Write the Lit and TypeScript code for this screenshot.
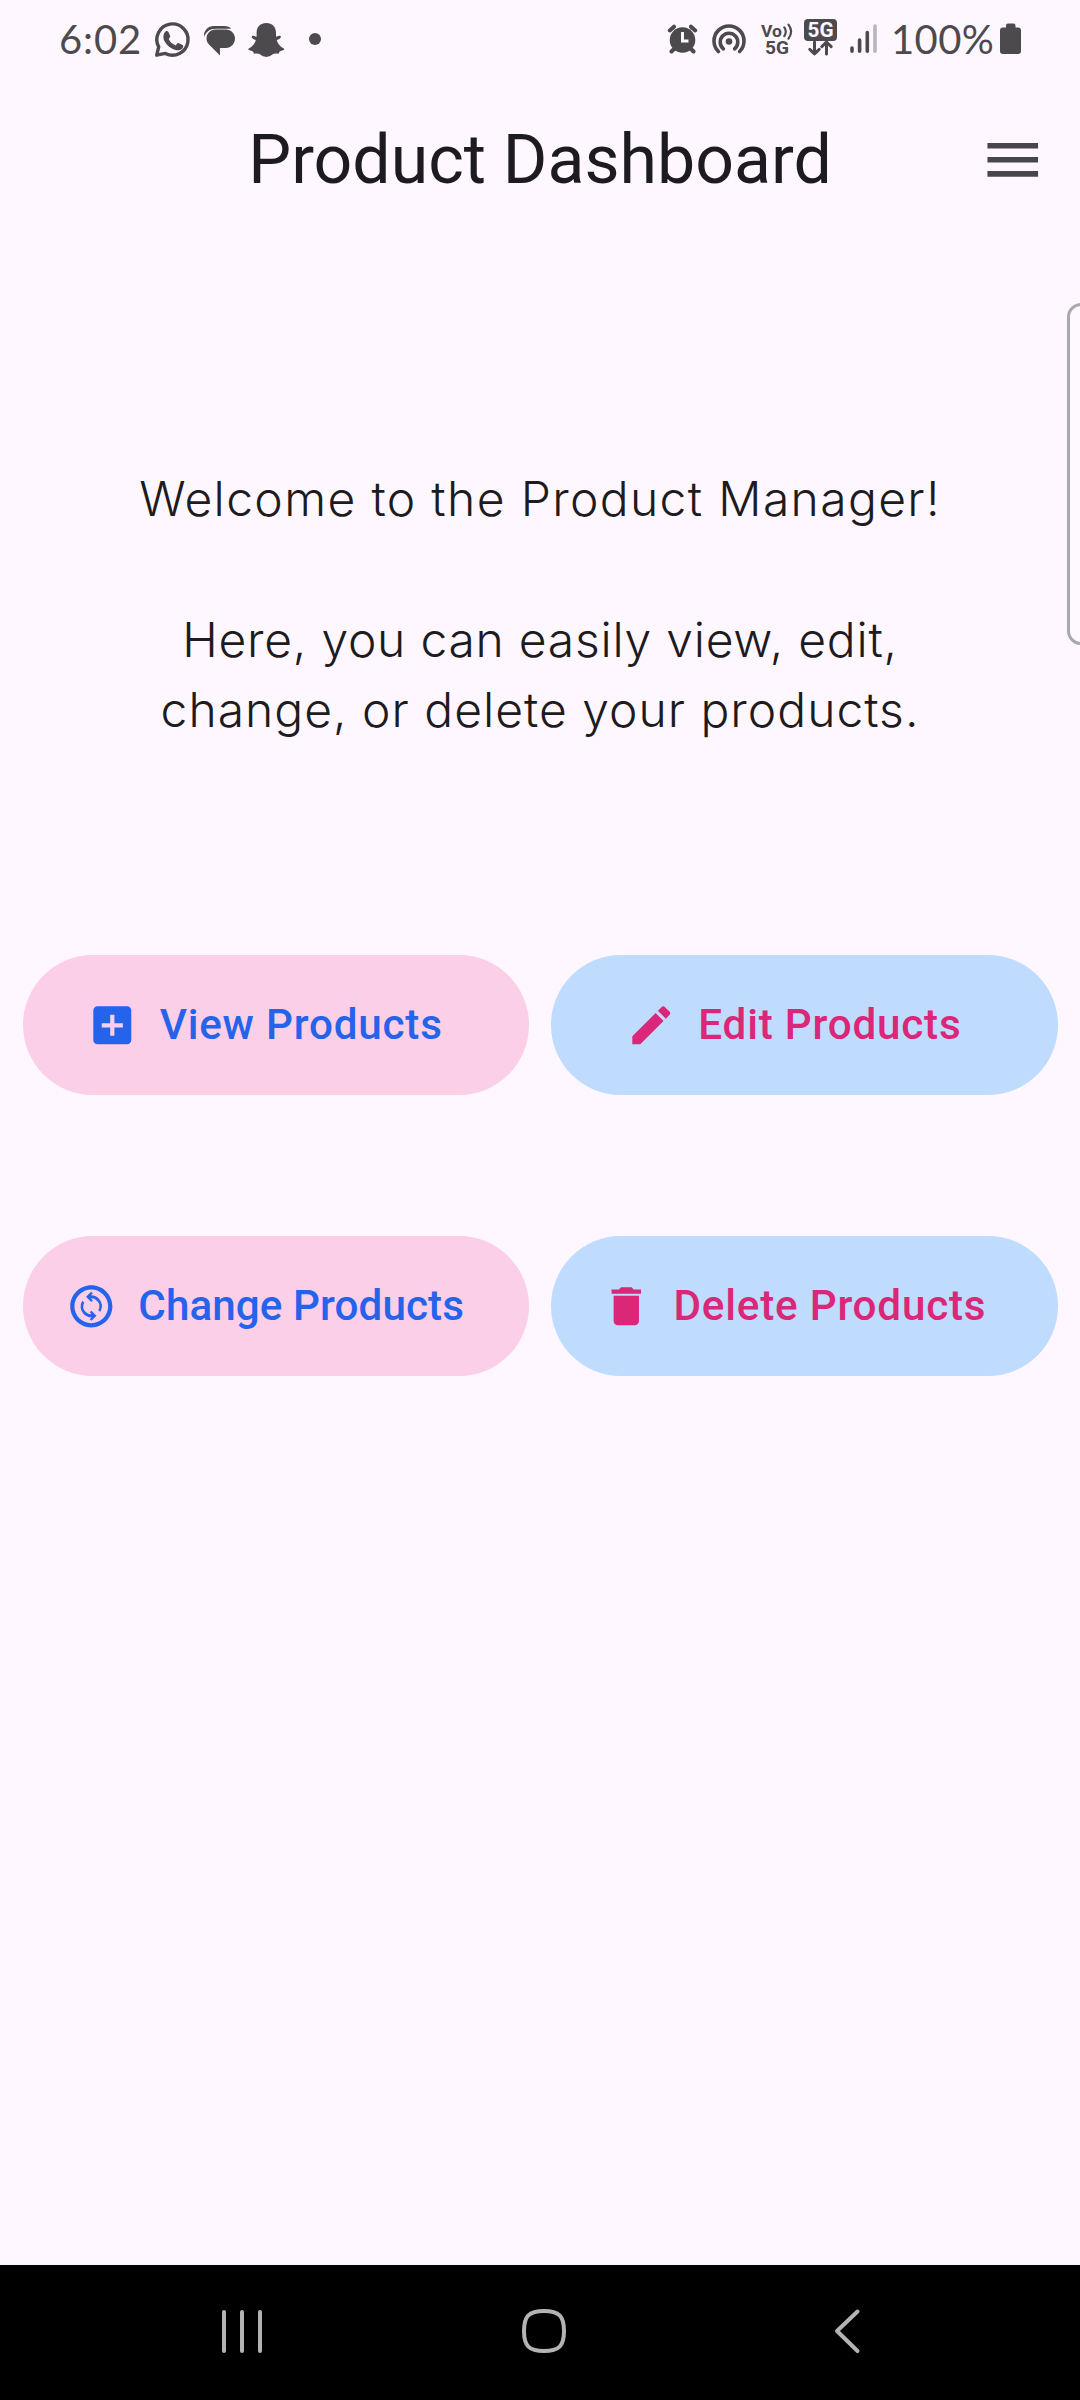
import { LitElement, html, css, svg, type TemplateResult } from "lit";
import { customElement, property } from "lit/decorators.js";

@customElement("status-bar")
class StatusBar extends LitElement {
  static styles = css`
    :host { display: flex; justify-content: space-between; height: 64px; padding: 19px 58px 0 59px; box-sizing: border-box; color: #4d4a4e; }
    .group { display: flex; height: 40px; align-items: flex-start; }
    svg { display: block; flex: none; height: 40px; fill: currentColor; }
    .line { fill: none; stroke: currentColor; stroke-linecap: round; stroke-linejoin: round; }
    .cut { fill: #fef7ff; }
    .time, .level { font: 400 40px/40px Lato, "Open Sans", sans-serif; white-space: nowrap; }
    .time { width: 94px; letter-spacing: 0.9px; }
    .level { width: 108px; letter-spacing: 0.4px; margin-left: 13px; }
    .chat { margin-left: 12px; }
    .snap { margin-left: 12px; }
    .dot { margin-left: 23px; }
    .tiny { font-family: Roboto, sans-serif; font-weight: 700; }
    .spot { margin-left: 13px; }
    .vo { margin-left: 13px; }
    .net { margin-left: 9px; }
    .signal { margin-left: 11px; }
  `;
  render() {
    return html`
      <div class="group">
        <span class="time">6:02</span>
        <svg width="38" viewBox="153 19 38 40">
          <path class="line" stroke-width="3.4" d="M156.7 55.2l2-8.3a15.6 15.6 0 1 1 6.6 6.5z" stroke-linejoin="miter"/>
          <path d="M165.5 31.4c.8-.7 2.3-.6 2.8.4l1.9 4.2c.3 1.2-1.2 2.3-1.5 3 1.5 3.1 3.9 5.2 7 6.4.8-.7 1.7-2.5 2.7-2.3l4.2 2c1 .6.7 2.1 0 3.1-1.7 2.1-4.8 2.6-7.8 1.5-5.3-1.9-9.2-5.7-11-10-.9-3-.3-6.6 1.7-8.3z"/>
        </svg>
        <svg class="chat" width="33" viewBox="203 19 33 40">
          <path d="M204 37c-.6-6.3 3.8-11 10-11h10c3.5 0 6 1 7 2.7h-15c-6.5 0-10 3.3-12 8.300z"/>
          <path d="M215.5 29.5h10.5c5 0 9 4 9 9s-4 9.5-9 9.5h-6v7.5l-10.5-10.5c-2-2-3-4-3-6.5 0-5 4-9 9-9z"/>
        </svg>
        <svg class="snap" width="37" viewBox="248 19 37 40">
          <path d="M266.3 23c5.9 0 9.7 4.1 9.7 9.5v4.2c1.3-.2 3.5-1.5 4.5-.6 1.3 1.2-.8 2.8-3.7 4 .9 4.2 3.6 6.7 7 8.3.8.5.7 1.3-.2 1.7l-4 1.3-1 2.3c-2.2-.1-4.2-.3-6.3.9-1.8 1.3-3.5 2.3-6 2.3s-4.2-1-6-2.3c-2.1-1.2-4.1-1-6.3-.9l-1-2.3-4-1.3c-.9-.4-1-1.2-.2-1.7 3.4-1.6 6.1-4.1 7-8.3-2.9-1.2-5-2.8-3.7-4 1-.9 3.2.4 4.5.6v-4.2c0-5.4 3.8-9.5 9.7-9.5z"/>
        </svg>
        <svg class="dot" width="14" viewBox="308 19 14 40"><circle cx="315" cy="39" r="6"/></svg>
      </div>
      <div class="group">
        <svg width="31" viewBox="667 19 31 40">
          <circle cx="682.5" cy="40" r="12.8"/>
          <path class="line" stroke-width="4" d="M669.8 30.5l4.2-3.8M695.2 30.5l-4.2-3.8M674.5 48.5l-3 3M690.5 48.5l3 3"/>
          <path d="M681 32h3v7.5h4.5v3H681z" class="cut"/>
        </svg>
        <svg class="spot" width="36" viewBox="711 19 36 40">
          <circle cx="729" cy="41.5" r="3.3"/>
          <path class="line" stroke-width="3.6" d="M723.4 48.8a8.8 8.8 0 1 1 11.2 0M718.4 51.6a15 15 0 1 1 21.2 0"/>
        </svg>
        <svg class="vo" width="34" viewBox="760 19 34 40">
          <text class="tiny" x="761" y="36.5" font-size="17" textLength="21" lengthAdjust="spacingAndGlyphs">Vo</text>
          <path class="line" stroke-width="2.2" d="M784.3 27.3q3 4.3 0 8.800M788.5 24.6q5.2 7 0 14"/>
          <text class="tiny" x="765" y="54" font-size="18" textLength="24" lengthAdjust="spacingAndGlyphs">5G</text>
        </svg>
        <svg class="net" width="35" viewBox="803 19 35 40">
          <rect x="804" y="19" width="33" height="22" rx="4"/>
          <text class="tiny cut" x="807.5" y="37" font-size="19.5" textLength="26" lengthAdjust="spacingAndGlyphs">5G</text>
          <path class="line" stroke-width="3" d="M814.5 42v11.5M809.8 49.3l4.7 4.5 4.7-4.5M826.5 54V42.5M821.8 46.7l4.7-4.5 4.7 4.5"/>
        </svg>
        <svg class="signal" width="29" viewBox="849 19 29 40">
          <path class="line" stroke-width="3.6" d="M852 48v3.2M859.6 40v11.2M867.3 32.5v18.7"/>
          <path class="line" stroke-width="3.6" opacity=".38" d="M875 26v25.2"/>
        </svg>
        <span class="level">100%</span>
        <svg width="23" viewBox="999 19 23 40">
          <path d="M1008 23.5h5.5q2 0 2 2v2h2.5q3 0 3 3V51q0 3-3 3h-15q-3 0-3-3V30.5q0-3 3-3h3v-2q0-2 2-2z"/>
        </svg>
      </div>`;
  }
}

@customElement("action-button")
class ActionButton extends LitElement {
  @property() label = "";
  @property() tone = "pink";
  @property({ type: Boolean }) tight = false;
  @property({ attribute: false }) icon: TemplateResult | null = null;
  static styles = css`
    :host { display: block; min-width: 0; }
    .pill { display: flex; align-items: center; justify-content: center; gap: 22px; width: 100%; height: 140.6px; margin: 0; padding: 0 64.5px 0 43px; box-sizing: border-box; border: 0; border-radius: 70.3px; font: 500 42.19px/60px Roboto, sans-serif; letter-spacing: 0.8px; white-space: nowrap; }
    .tight { letter-spacing: 0.08px; }
    .pink { background: #fbcfe8; color: #2563eb; }
    .blue { background: #bfdbfe; color: #db2777; }
    svg { display: block; flex: none; width: 50.6px; height: 50.6px; fill: currentColor; }
  `;
  render() {
    return html`<button class="pill ${this.tone} ${this.tight ? "tight" : ""}"><svg viewBox="0 0 24 24">${this.icon}</svg><span>${this.label}</span></button>`;
  }
}

const ACTIONS = [
  { label: "View Products", tone: "pink", tight: false, icon: svg`<path d="M19 3H5c-1.11 0-2 .9-2 2v14c0 1.1.89 2 2 2h14c1.1 0 2-.9 2-2V5c0-1.1-.9-2-2-2zm-2 10h-4v4h-2v-4H7v-2h4V7h2v4h4v2z"/>` },
  { label: "Edit Products", tone: "blue", tight: false, icon: svg`<path d="M3 17.25V21h3.75L17.81 9.94l-3.75-3.75L3 17.25zM20.71 7.04c.39-.39.39-1.02 0-1.41l-2.34-2.34c-.39-.39-1.02-.39-1.41 0l-1.83 1.83 3.75 3.75 1.83-1.83z"/>` },
  { label: "Change Products", tone: "pink", tight: true, icon: svg`<path d="M12 2C6.48 2 2 6.48 2 12s4.48 10 10 10 10-4.48 10-10S17.52 2 12 2zm0 18c-4.41 0-8-3.59-8-8s3.59-8 8-8 8 3.59 8 8-3.59 8-8 8z"/><path d="M12.06 18.9l-.78-.78.92-.92c-.09 0-.18.01-.2.01-1.28 0-2.56-.49-3.54-1.46A5.006 5.006 0 0 1 7.75 9.35l.92.92a3.65 3.65 0 0 0 .68 4.41c.8.8 1.87 1.08 2.85 1.08l-.92-.92.78-.78 2.42 2.42-2.42 2.42zM11.94 5.1l.78.78-.92.92c.09 0 .18-.01.2-.01 1.28 0 2.56.49 3.54 1.46a5.006 5.006 0 0 1 .71 6.4l-.92-.92a3.65 3.65 0 0 0-.68-4.41 3.97 3.97 0 0 0-2.85-1.08l.92.92-.78.78-2.42-2.42 2.42-2.42z"/>` },
  { label: "Delete Products", tone: "blue", tight: false, icon: svg`<path d="M6 19c0 1.1.9 2 2 2h8c1.1 0 2-.9 2-2V7H6v12zM19 4h-3.5l-1-1h-5l-1 1H5v2h14V4z"/>` },
];

@customElement("app-root")
class AppRoot extends LitElement {
  static styles = css`
    :host { display: flex; flex-direction: column; position: relative; width: 1080px; height: 2400px; overflow: hidden; background: #fef7ff; color: #1d1b20; }
    .appbar { display: grid; grid-template-columns: 101px 1fr 101px; align-items: center; height: 191px; flex: none; }
    .title { grid-column: 2; margin: 0; text-align: center; font: 400 68px/84px Roboto, sans-serif; white-space: nowrap; }
    .menu { display: block; padding: 0; border: 0; background: none; width: 67.5px; height: 67.5px; color: #49454f; }
    .menu svg { display: block; width: 67.5px; height: 67.5px; fill: currentColor; }
    .intro { padding: 209px 0 0; text-align: center; font: 350 48px/70.3px Inter, sans-serif; white-space: nowrap; flex: none; }
    .intro p { margin: 0; }
    .intro .welcome { margin-bottom: 70.3px; letter-spacing: 1.35px; }
    .intro .first { letter-spacing: 0.75px; }
    .intro .second { letter-spacing: 1px; }
    .actions { display: grid; grid-template-columns: repeat(2, minmax(0, 1fr)); column-gap: 22.5px; row-gap: 140.6px; padding: 209.5px 22.5px 0; }
    .edge { position: absolute; right: -20px; top: 303px; width: 33px; height: 342px; box-sizing: border-box; border: 3px solid #aba8ad; border-radius: 14px; background: #fdf9ff; }
    .nav { display: block; margin-top: auto; height: 135px; flex: none; background: #000; }
    .nav svg { display: block; width: 1080px; height: 135px; fill: none; stroke: #b3b3b3; stroke-width: 4; stroke-linecap: round; stroke-linejoin: round; }
  `;
  render() {
    return html`
      <status-bar></status-bar>
      <header class="appbar">
        <h1 class="title">Product Dashboard</h1>
        <button class="menu" aria-label="Menu"><svg viewBox="0 0 24 24"><path d="M3 18h18v-2H3v2zm0-5h18v-2H3v2zm0-7v2h18V6H3z"/></svg></button>
      </header>
      <section class="intro">
        <p class="welcome">Welcome to the Product Manager!</p>
        <p><span class="first">Here, you can easily view, edit,</span><br /><span class="second">change, or delete your products.</span></p>
      </section>
      <section class="actions">
        ${ACTIONS.map((a) => html`<action-button .label=${a.label} .tone=${a.tone} .tight=${a.tight} .icon=${a.icon}></action-button>`)}
      </section>
      <div class="edge"></div>
      <nav class="nav">
        <svg viewBox="0 2265 1080 135">
          <path d="M224 2312v39M242 2312v39M260 2312v39"/>
          <path d="M544 2311c15 0 20 5 20 20s-5 20-20 20-20-5-20-20 5-20 20-20z"/>
          <path d="M857.5 2311.5L837 2331l20.5 20"/>
        </svg>
      </nav>`;
  }
}
